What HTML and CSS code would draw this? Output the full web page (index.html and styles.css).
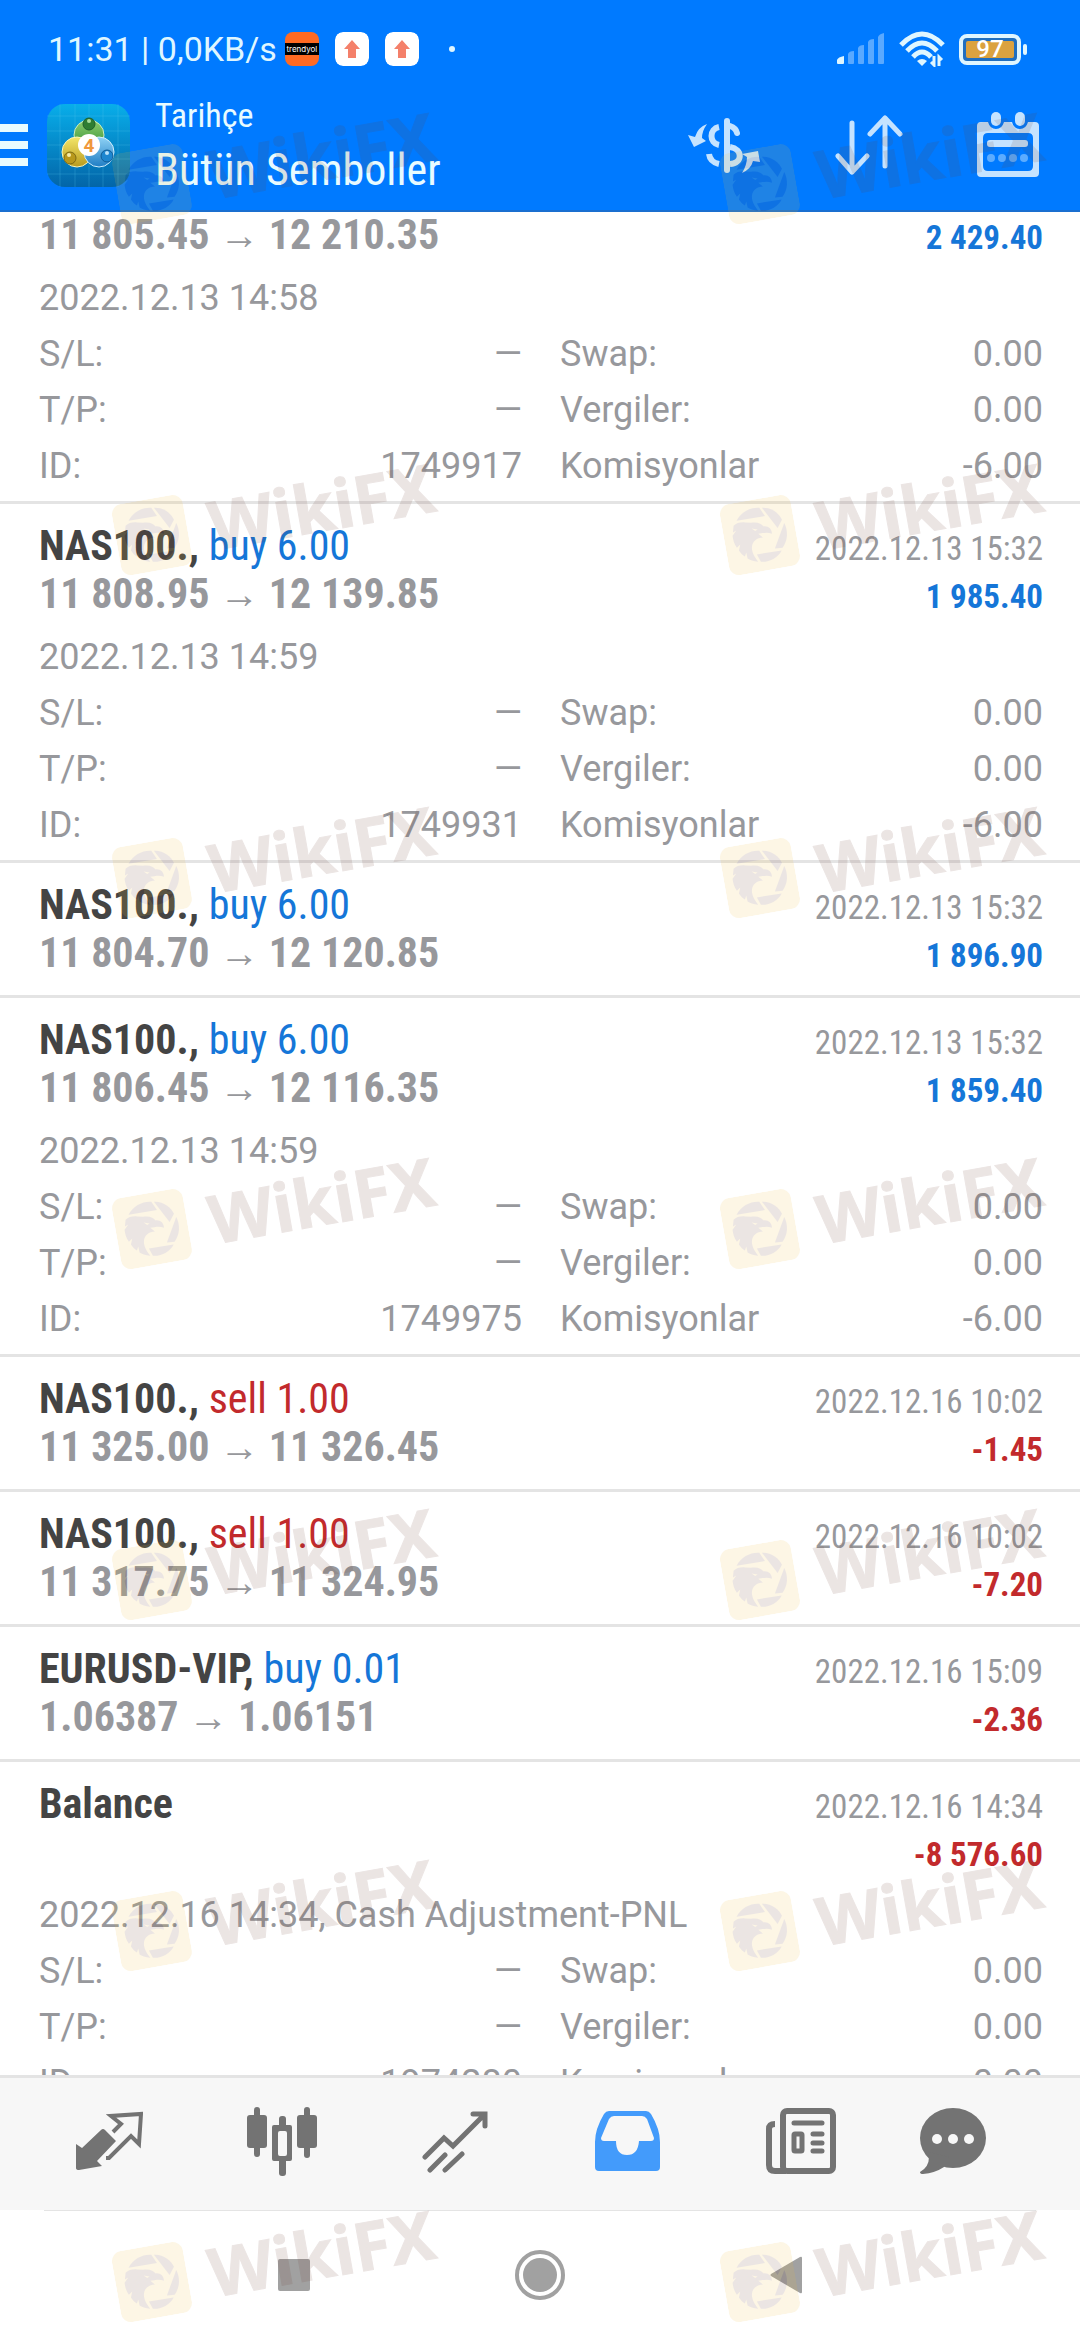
FILE: index.html
```
<!DOCTYPE html>
<html lang="tr">
<head>
    <meta charset="UTF-8">
    <meta name="viewport" content="width=device-width, initial-scale=1.0">
    <title>Tarihçe</title>
    <link rel="stylesheet" href="styles.css">
</head>
<body>

    <!-- shared eagle badge -->
    <svg class="defs" aria-hidden="true">
        <symbol id="eagle" viewBox="-108 -108 216 216">
            <rect x="-108" y="-108" width="216" height="216" rx="32" fill="#f0be3c"/>
            <g transform="rotate(10) translate(-157 -298)" fill="#6e3e32">
                <path d="M87 255C100 228 130 214 155 216L172 241Z"/>
                <path d="M163 216C190 214 214 232 223 252L210 277Z"/>
                <path d="M230 262C242 286 241 314 225 336L202 338Z"/>
                <path d="M148 356L222 344C212 365 185 380 160 378Z"/>
                <path d="M78 270C86 262 98 259 112 260L130 261C150 258 162 264 168 272C182 270 193 280 193 294C180 288 165 292 152 294L166 305C148 306 134 316 133 334C132 350 142 366 152 378C138 377 126 372 120 368L116 350L112 362C104 357 98 350 94 344L98 326L88 336C80 326 76 312 75 300L86 284L76 290Z"/>
                <path d="M132 278L150 281L143 286Z" fill="#f0be3c"/>
            </g>
        </symbol>
    </svg>

    <div class="app">
        <header class="header">
            <div class="status-bar">
                <div class="status-left">
                    <span>11:31 | 0,0KB/s</span>
                    <span class="notif notif-shop"><b>trendyol</b></span>
                    <svg class="notif" viewBox="0 0 34 34"><rect width="34" height="34" rx="8" fill="#fff"/><path d="M17 8L25 17H21V26H13V17H9Z" fill="#f4806a"/></svg>
                    <svg class="notif" viewBox="0 0 34 34"><rect width="34" height="34" rx="8" fill="#fff"/><path d="M17 8L25 17H21V26H13V17H9Z" fill="#f4806a"/></svg>
                    <span class="more-dot"></span>
                </div>
                <div class="status-right">
                    <svg width="48" height="32" viewBox="0 0 48 32" fill="#5aa9ff">
                        <path d="M0 30V27Q1 24 7 23V30Q7 31 6 31H1Q0 31 0 30Z" fill="#dff6ff"/>
                        <path d="M11 30V21Q12 18 17 18V30Q17 31 16 31H12Q11 31 11 30Z"/>
                        <path d="M21 30V15Q22 12 27 12V30Q27 31 26 31H22Q21 31 21 30Z"/>
                        <path d="M31 30V9Q32 6 37 6V30Q37 31 36 31H32Q31 31 31 30Z"/>
                        <path d="M41 30V4Q42 1 47 0V30Q47 31 46 31H42Q41 31 41 30Z"/>
                    </svg>
                    <svg width="48" height="36" viewBox="0 0 48 36" fill="none" stroke="#dff6ff" stroke-width="5">
                        <path d="M3 14Q24 -8 45 14"/>
                        <path d="M9 20Q24 4 39 20"/>
                        <path d="M15 26Q24 16 33 26"/>
                        <path d="M19 30Q24 26 29 30L24 35Z" fill="#dff6ff" stroke="none"/>
                        <path d="M36 25V34L33 31M41 35V26L44 29" stroke-width="3"/>
                    </svg>
                    <span class="battery"><span class="battery-level">97</span></span>
                </div>
            </div>

            <div class="toolbar">
                <button class="menu-btn" aria-label="Menü"><i></i><i></i><i></i></button>
                <svg class="app-icon" viewBox="0 0 83 83">
                    <defs>
                        <linearGradient id="tile" x1="0" y1="0" x2="0" y2="1"><stop offset="0" stop-color="#08aeea"/><stop offset="1" stop-color="#0365a8"/></linearGradient>
                        <linearGradient id="green" x1="0" y1="0" x2="0" y2="1"><stop offset="0" stop-color="#8fce6e"/><stop offset="1" stop-color="#2f8f36"/></linearGradient>
                        <linearGradient id="gold" x1="0" y1="0" x2="0" y2="1"><stop offset="0" stop-color="#f3e66a"/><stop offset="1" stop-color="#b89a1d"/></linearGradient>
                        <linearGradient id="sky" x1="0" y1="0" x2="0" y2="1"><stop offset="0" stop-color="#8fd2f5"/><stop offset="1" stop-color="#1f7dc4"/></linearGradient>
                    </defs>
                    <rect width="83" height="83" rx="18" fill="url(#tile)"/>
                    <path d="M13 0V83M28 0V83M42 0V83M56 0V83M71 0V83M0 12H83M0 27H83M0 41H83M0 55H83M0 70H83" stroke="#5cc6f2" stroke-opacity=".25"/>
                    <circle cx="42" cy="31" r="15" fill="url(#green)" stroke="#cdeec0" stroke-width="1"/>
                    <circle cx="30" cy="48" r="15" fill="url(#gold)" stroke="#fbf6b8" stroke-width="1"/>
                    <circle cx="52" cy="48" r="15" fill="url(#sky)" stroke="#d0eefc" stroke-width="1"/>
                    <circle cx="42" cy="20" r="6" fill="#2f7d32" stroke="#1f5f2a" stroke-width="1"/>
                    <circle cx="42" cy="17" r="2" fill="#a9dc9a"/>
                    <circle cx="23" cy="54" r="6" fill="#b8981c" stroke="#7d6a14" stroke-width="1"/>
                    <circle cx="22" cy="51" r="2" fill="#f6ecac"/>
                    <circle cx="60" cy="52" r="6" fill="#1d86cf" stroke="#0f5c96" stroke-width="1"/>
                    <circle cx="60" cy="49" r="2" fill="#b9e2fa"/>
                    <circle cx="42" cy="41" r="11" fill="#fff"/>
                    <text x="42" y="48" class="app-icon-num">4</text>
                </svg>
                <div class="titles">
                    <p>Tarihçe</p>
                    <h1>Bütün Semboller</h1>
                </div>
                <button class="tool-btn" aria-label="Sembol">
                    <svg width="76" height="60" viewBox="0 0 76 60" fill="none" stroke="#c5e3ff" stroke-width="6">
                        <path d="M2 20L9 22Q12 12 21 9Q16 16 16 23L20 26L8 32Z" fill="#c5e3ff" stroke="none"/>
                        <path d="M33 12C23 14 23 28 33 30M23 39Q24 47 33 49"/>
                        <path d="M41 6V55" stroke-linecap="round"/>
                        <path d="M44 11Q50 13 51 18" stroke-linecap="round"/>
                        <path d="M44 32C57 34 57 48 44 49"/>
                        <path d="M72 36L56 39L61 42Q61 50 56 58Q65 54 67 46L74 47Z" fill="#c5e3ff" stroke="none"/>
                    </svg>
                </button>
                <button class="tool-btn" aria-label="Sırala">
                    <svg width="68" height="60" viewBox="0 0 68 60" fill="none" stroke="#c5e3ff" stroke-width="5" stroke-linecap="round" stroke-linejoin="round">
                        <path d="M17 8V57M3 41L17 57L32 41M50 51V3M35 19L50 3L65 19"/>
                    </svg>
                </button>
                <button class="tool-btn" aria-label="Takvim">
                    <svg width="64" height="66" viewBox="0 0 64 66">
                        <path fill="#c5e3ff" fill-rule="evenodd" d="M5 10H12Q14 17 20 17T28 10H36Q38 17 44 17T52 10H59Q63 10 63 14V61Q63 65 59 65H5Q1 65 1 61V14Q1 10 5 10ZM12 21Q7 21 7 26V54Q7 59 12 59H52Q57 59 57 54V26Q57 21 52 21Z"/>
                        <rect x="15" y="0" width="10" height="14" rx="5" fill="#c5e3ff"/>
                        <rect x="39" y="0" width="10" height="14" rx="5" fill="#c5e3ff"/>
                        <rect x="11" y="28" width="41" height="7" rx="3" fill="#c5e3ff"/>
                        <g fill="#5cacff"><circle cx="15" cy="46" r="4"/><circle cx="26" cy="46" r="4"/><circle cx="37" cy="46" r="4"/><circle cx="48" cy="46" r="4"/></g>
                    </svg>
                </button>
            </div>
        </header>

        <main class="history">
            <article class="record record-open record-cut">
                <div class="line"><span class="price">11 805.45 <i>→</i> 12 210.35</span><b class="profit up">2 429.40</b></div>
                <div class="details">
                    <p>2022.12.13 14:58</p>
                    <dl>
                        <div><dt>S/L:</dt><dd>—</dd></div><div><dt>Swap:</dt><dd>0.00</dd></div>
                        <div><dt>T/P:</dt><dd>—</dd></div><div><dt>Vergiler:</dt><dd>0.00</dd></div>
                        <div><dt>ID:</dt><dd>1749917</dd></div><div><dt>Komisyonlar</dt><dd>-6.00</dd></div>
                    </dl>
                </div>
            </article>

            <article class="record record-open">
                <div class="line"><h2>NAS100., <span class="up">buy 6.00</span></h2><time>2022.12.13 15:32</time></div>
                <div class="line"><span class="price">11 808.95 <i>→</i> 12 139.85</span><b class="profit up">1 985.40</b></div>
                <div class="details">
                    <p>2022.12.13 14:59</p>
                    <dl>
                        <div><dt>S/L:</dt><dd>—</dd></div><div><dt>Swap:</dt><dd>0.00</dd></div>
                        <div><dt>T/P:</dt><dd>—</dd></div><div><dt>Vergiler:</dt><dd>0.00</dd></div>
                        <div><dt>ID:</dt><dd>1749931</dd></div><div><dt>Komisyonlar</dt><dd>-6.00</dd></div>
                    </dl>
                </div>
            </article>

            <article class="record">
                <div class="line"><h2>NAS100., <span class="up">buy 6.00</span></h2><time>2022.12.13 15:32</time></div>
                <div class="line"><span class="price">11 804.70 <i>→</i> 12 120.85</span><b class="profit up">1 896.90</b></div>
            </article>

            <article class="record record-open">
                <div class="line"><h2>NAS100., <span class="up">buy 6.00</span></h2><time>2022.12.13 15:32</time></div>
                <div class="line"><span class="price">11 806.45 <i>→</i> 12 116.35</span><b class="profit up">1 859.40</b></div>
                <div class="details">
                    <p>2022.12.13 14:59</p>
                    <dl>
                        <div><dt>S/L:</dt><dd>—</dd></div><div><dt>Swap:</dt><dd>0.00</dd></div>
                        <div><dt>T/P:</dt><dd>—</dd></div><div><dt>Vergiler:</dt><dd>0.00</dd></div>
                        <div><dt>ID:</dt><dd>1749975</dd></div><div><dt>Komisyonlar</dt><dd>-6.00</dd></div>
                    </dl>
                </div>
            </article>

            <article class="record">
                <div class="line"><h2>NAS100., <span class="down">sell 1.00</span></h2><time>2022.12.16 10:02</time></div>
                <div class="line"><span class="price">11 325.00 <i>→</i> 11 326.45</span><b class="profit down">-1.45</b></div>
            </article>

            <article class="record">
                <div class="line"><h2>NAS100., <span class="down">sell 1.00</span></h2><time>2022.12.16 10:02</time></div>
                <div class="line"><span class="price">11 317.75 <i>→</i> 11 324.95</span><b class="profit down">-7.20</b></div>
            </article>

            <article class="record">
                <div class="line"><h2>EURUSD-VIP, <span class="up">buy 0.01</span></h2><time>2022.12.16 15:09</time></div>
                <div class="line"><span class="price">1.06387 <i>→</i> 1.06151</span><b class="profit down">-2.36</b></div>
            </article>

            <article class="record record-open">
                <div class="line"><h2>Balance</h2><time>2022.12.16 14:34</time></div>
                <div class="line"><span class="price"></span><b class="profit down">-8 576.60</b></div>
                <div class="details">
                    <p>2022.12.16 14:34, Cash Adjustment-PNL</p>
                    <dl>
                        <div><dt>S/L:</dt><dd>—</dd></div><div><dt>Swap:</dt><dd>0.00</dd></div>
                        <div><dt>T/P:</dt><dd>—</dd></div><div><dt>Vergiler:</dt><dd>0.00</dd></div>
                        <div><dt>ID:</dt><dd>1974280</dd></div><div><dt>Komisyonlar</dt><dd>0.00</dd></div>
                    </dl>
                </div>
            </article>
        </main>

        <nav class="tabs">
            <button aria-label="Fiyatlar">
                <svg width="68" height="60" viewBox="0 0 68 60">
                    <path fill="#737373" d="M1 33L7 37L26 19Q28 17 30 19L41 30L22 50L27 55L4 59Q1 59 1 57Z"/>
                    <path fill="none" stroke="#737373" stroke-width="4" d="M38 21L46 13L36 5L66 3L64 33L56 25L34 47H31"/>
                </svg>
            </button>
            <button aria-label="Grafik">
                <svg width="72" height="70" viewBox="0 0 72 70" fill="#737373">
                    <rect x="8" y="1" width="6" height="50" rx="3"/><rect x="1" y="9" width="20" height="33" rx="3"/>
                    <rect x="58" y="1" width="6" height="51" rx="3"/><rect x="51" y="9" width="20" height="33" rx="3"/>
                    <rect x="33" y="10" width="7" height="14" rx="3"/><rect x="33" y="52" width="7" height="18" rx="3"/>
                    <path fill-rule="evenodd" d="M28 19H44Q46 19 46 21V53Q46 55 44 55H28Q26 55 26 53V21Q26 19 28 19ZM34 25Q32 25 32 27V48Q32 50 34 50H39Q41 50 41 48V27Q41 25 39 25Z"/>
                </svg>
            </button>
            <button aria-label="İşlem">
                <svg width="66" height="63" viewBox="0 0 66 63" fill="none" stroke="#737373" stroke-width="5" stroke-linecap="round">
                    <path d="M3 47L22 28L31 36L62 5M51 4H63V16M8 60L23 45M23 60L40 44"/>
                </svg>
            </button>
            <button aria-label="Tarihçe" aria-current="page">
                <svg width="67" height="62" viewBox="0 0 67 62">
                    <path fill="#439bfb" fill-rule="evenodd" d="M15 1H52Q55 1 57 4Q66 19 66 32V57Q66 61 62 61H5Q1 61 1 57V32Q1 19 10 4Q12 1 15 1ZM20 6Q17 6 15 9L7 28Q7 31 10 31H22Q22 45 33 45T45 31H57Q60 31 60 28L53 9Q51 6 48 6Z"/>
                </svg>
            </button>
            <button aria-label="Haberler">
                <svg width="70" height="68" viewBox="0 0 70 68" fill="none" stroke="#737373">
                    <rect x="17" y="4" width="50" height="60" rx="4" stroke-width="6"/>
                    <path d="M9 17Q3 17 3 22V58Q3 64 9 64H20" stroke-width="6"/>
                    <path d="M28 16H56M47 27H56M47 36H56M47 44H56" stroke-width="5" stroke-linecap="round"/>
                    <rect x="28" y="27" width="8" height="17" rx="1" stroke-width="5"/>
                </svg>
            </button>
            <button aria-label="Mesajlar">
                <svg width="68" height="68" viewBox="0 0 68 68" fill="#737373">
                    <ellipse cx="34" cy="31" rx="33" ry="30"/>
                    <path d="M6 44L10 50Q10 60 1 65Q1 67 4 67Q16 66 25 60L30 50Z"/>
                    <g fill="#f7f7f7"><circle cx="18" cy="32" r="5"/><circle cx="34" cy="32" r="5"/><circle cx="50" cy="32" r="5"/></g>
                </svg>
            </button>
        </nav>

        <footer class="system-nav">
            <button aria-label="Son uygulamalar"><svg width="34" height="34" viewBox="0 0 34 34"><rect x="1" y="1" width="32" height="32" rx="2" fill="#a1a1a1"/></svg></button>
            <button aria-label="Ana ekran"><svg width="50" height="50" viewBox="0 0 50 50"><circle cx="25" cy="25" r="23" fill="none" stroke="#a1a1a1" stroke-width="4"/><circle cx="25" cy="25" r="17" fill="#a1a1a1"/></svg></button>
            <button aria-label="Geri"><svg width="32" height="38" viewBox="0 0 32 38"><path d="M1 18L30 1Q32 0 32 2V36Q32 38 30 37L1 20Q0 19 1 18Z" fill="#a1a1a1"/></svg></button>
        </footer>

        <div class="watermarks" aria-hidden="true">
            <div class="mark"><svg><use href="#eagle"/></svg><span>WikiFX</span></div>
            <div class="mark"><svg><use href="#eagle"/></svg><span>WikiFX</span></div>
            <div class="mark"><svg><use href="#eagle"/></svg><span>WikiFX</span></div>
            <div class="mark"><svg><use href="#eagle"/></svg><span>WikiFX</span></div>
            <div class="mark"><svg><use href="#eagle"/></svg><span>WikiFX</span></div>
            <div class="mark"><svg><use href="#eagle"/></svg><span>WikiFX</span></div>
            <div class="mark"><svg><use href="#eagle"/></svg><span>WikiFX</span></div>
            <div class="mark"><svg><use href="#eagle"/></svg><span>WikiFX</span></div>
            <div class="mark"><svg><use href="#eagle"/></svg><span>WikiFX</span></div>
            <div class="mark"><svg><use href="#eagle"/></svg><span>WikiFX</span></div>
            <div class="mark"><svg><use href="#eagle"/></svg><span>WikiFX</span></div>
            <div class="mark"><svg><use href="#eagle"/></svg><span>WikiFX</span></div>
            <div class="mark"><svg><use href="#eagle"/></svg><span>WikiFX</span></div>
            <div class="mark"><svg><use href="#eagle"/></svg><span>WikiFX</span></div>
        </div>
    </div>

</body>
</html>
```

FILE: styles.css
```
:root {
    --blue: #007aff;
    --buy: #1576d8;
    --sell: #c22a2c;
    --muted: #97989c;
    --dark: #444444;
    --divider: #e4e4e4;
    --condensed: "Roboto Condensed", Roboto, sans-serif;
}

* {
    box-sizing: border-box;
    margin: 0;
    padding: 0;
}

body {
    font-family: Roboto, sans-serif;
    font-size: 36px;
    background: #fff;
    color: var(--muted);
}

button {
    border: none;
    background: none;
    cursor: pointer;
}

svg {
    display: block;
}

.defs {
    position: absolute;
    width: 0;
    height: 0;
}

.app {
    position: relative;
    height: 100vh;
    display: flex;
    flex-direction: column;
    overflow: hidden;
}

/* header */
.header {
    position: relative;
    z-index: 1;
    flex: none;
    background: var(--blue);
    border-bottom: 2px solid #1a6fd0;
    color: #e8fbff;
}

.status-bar {
    height: 90px;
    padding: 8px 53px 0 48px;
    display: flex;
    justify-content: space-between;
    align-items: center;
}

.status-left,
.status-right {
    display: flex;
    align-items: center;
}

.status-left {
    gap: 16px;
    color: #dff6ff;
    font-size: 34px;
}

.status-left > span:first-child {
    margin-right: -8px;
}

.status-right {
    gap: 13px;
}

.notif {
    width: 34px;
    height: 34px;
    border-radius: 8px;
}

.notif-shop {
    display: flex;
    align-items: center;
    background: linear-gradient(#ff6a22 11px, #000 11px, #000 23px, #ff6a22 23px);
    color: #fff;
    overflow: hidden;
}

.notif-shop b {
    width: 100%;
    text-align: center;
    font: 8px Inter, sans-serif;
}

.more-dot {
    width: 6px;
    height: 6px;
    margin-left: 14px;
    border-radius: 50%;
    background: #dff6ff;
}

.battery {
    position: relative;
    width: 62px;
    height: 31px;
    margin-right: 6px;
    padding: 3px;
    border: 4px solid #dff6ff;
    border-radius: 8px;
    background: #1f6fc0;
}

.battery::after {
    content: "";
    position: absolute;
    top: 6px;
    right: -10px;
    width: 4px;
    height: 11px;
    border-radius: 2px;
    background: #dff6ff;
}

.battery-level {
    display: block;
    height: 17px;
    border-radius: 2px;
    background: #dba23f;
    color: #fff;
    font-size: 24px;
    font-weight: 500;
    line-height: 17px;
    text-align: center;
}

.toolbar {
    padding: 0 40px 10px 0;
    display: flex;
    align-items: center;
}

.menu-btn {
    width: 28px;
    display: flex;
    flex-direction: column;
    gap: 9px;
}

.menu-btn i {
    width: 28px;
    height: 8px;
    background: #e8fbff;
}

.app-icon {
    width: 83px;
    height: 83px;
    margin: 0 25px 0 19px;
}

.app-icon-num {
    font: 700 19px Roboto, sans-serif;
    fill: #f0983c;
    text-anchor: middle;
}

.titles {
    flex: 1;
    font-family: var(--condensed);
}

.titles p {
    font-size: 34px;
    line-height: 50px;
}

.titles h1 {
    font-size: 44px;
    font-weight: 400;
    line-height: 60px;
}

.tool-btn + .tool-btn {
    margin-left: 73px;
}

/* history list */
.history {
    flex: 1;
    min-height: 0;
    margin-top: -1px;
    overflow: hidden;
}

.record {
    padding: 18px 37px 18px 39px;
    border-bottom: 3px solid var(--divider);
}

.record-open {
    padding-bottom: 7px;
}

/* scrolled half under the header */
.record-cut {
    padding-top: 0;
}

.line {
    display: flex;
    justify-content: space-between;
    height: 48px;
    font-family: var(--condensed);
    font-size: 33px;
    line-height: 48px;
}

.line h2,
.price {
    font-size: 42px;
    font-weight: 700;
    white-space: nowrap;
}

.line h2 {
    color: var(--dark);
}

.line h2 span {
    font-weight: 400;
}

.price i {
    font: 700 40px/40px "Liberation Sans", sans-serif;
}

.line time,
.profit {
    padding-top: 3px;
}

.up {
    color: var(--buy);
}

.down {
    color: var(--sell);
}

.details {
    margin-top: 11px;
    line-height: 56px;
}

.details dl {
    display: grid;
    grid-template-columns: 1fr 1fr;
    column-gap: 38px;
}

.details dl div {
    display: flex;
    justify-content: space-between;
}

/* bottom tabs */
.tabs {
    flex: none;
    height: 135px;
    padding: 0 61px 0 22px;
    display: grid;
    grid-template-columns: repeat(5, 173fr) 132fr;
    background: #f7f7f7;
    border-top: 3px solid var(--divider);
}

.tabs button {
    display: flex;
    justify-content: center;
    align-items: center;
    padding-bottom: 6px;
}

.system-nav {
    flex: none;
    height: 130px;
    display: flex;
    justify-content: center;
    background: linear-gradient(var(--divider), var(--divider)) center top / calc(100% - 88px) 1px no-repeat;
}

.system-nav button {
    width: 246px;
    display: flex;
    justify-content: center;
    align-items: center;
}

/* repeated brand overlay */
.watermarks {
    position: absolute;
    z-index: 2;
    inset: 126px 0 0 114px;
    display: grid;
    grid-template-columns: 326px 326px;
    grid-template-rows: 72px 64px;
    grid-auto-rows: 72px;
    gap: 279px 282px;
    align-content: start;
    pointer-events: none;
}

.mark {
    height: 72px;
    display: flex;
    align-items: center;
    gap: 22px;
    opacity: .13;
    transform: rotate(-10deg);
}

.mark svg {
    flex: none;
    width: 72px;
    height: 72px;
}

.mark span {
    color: #6e3e32;
    font: 700 67px/72px "Noto Sans", sans-serif;
    -webkit-text-stroke: 1px #6e3e32;
}
```
